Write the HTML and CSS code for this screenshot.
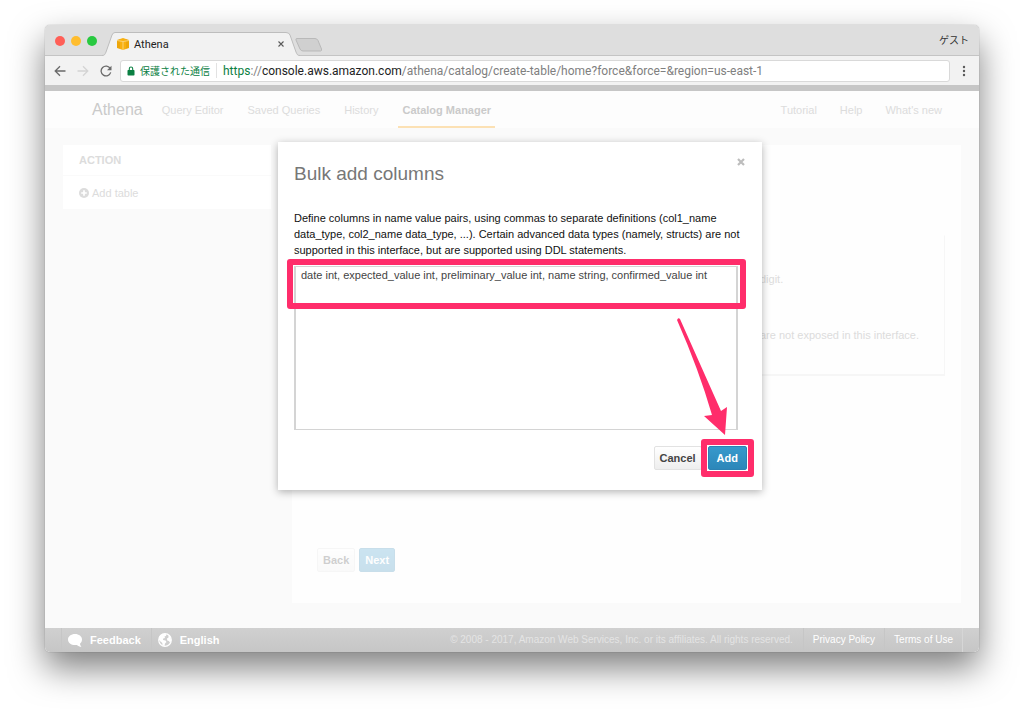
FILE: index.html
```html
<!DOCTYPE html>
<html lang="en">
<head>
    <meta charset="UTF-8">
    <meta name="viewport" content="width=device-width, initial-scale=1.0">
    <title>Athena</title>

    <link rel="stylesheet" href="styles.css">
</head>
<body>
    <div class="window">
        <div class="tab-bar">
            <div class="lights">
                <span class="light red"></span>
                <span class="light yellow"></span>
                <span class="light green"></span>
            </div>
            <div class="tab">
                <svg class="tab-shape" viewBox="0 0 198 24" preserveAspectRatio="none">
                    <path d="M0 23.5 C3 23.5 3 22 4 20 L10 3 Q11 .5 13 .5 H184 Q187 .5 188 3 L194 20 C195 22 195 23.5 198 23.5 V24 H0 Z" fill="#f2f2f2"/>
                    <path d="M0 23.5 C3 23.5 3 22 4 20 L10 3 Q11 .5 13 .5 H184 Q187 .5 188 3 L194 20 C195 22 195 23.5 198 23.5" fill="none" stroke="#bdbdbd"/>
                </svg>
                <svg class="favicon" viewBox="0 0 12 12">
                    <path d="M0 2 L3 1 V11 L0 10 Z M12 2 L9 1 V11 L12 10 Z" fill="#eda60a"/>
                    <path d="M3 1 L6 0 L9 1 V11 L6 12 L3 11 Z" fill="#f8b010"/>
                    <path d="M0 2.500 L6 3.500 L12 2.500 M6 3.500 V12" stroke="#fbdc90" stroke-width=".8" fill="none"/>
                </svg>
                <span class="tab-title">Athena</span>
                <button class="tab-close" aria-label="Close tab">
                    <svg width="8" height="8" viewBox="0 0 8 8"><path d="M1.500 1.500 L6.500 6.500 M6.500 1.500 L1.500 6.500" stroke="#5a5a5a" stroke-width="1.1"/></svg>
                </button>
            </div>
            <svg class="new-tab" width="28" height="14" viewBox="0 0 28 14">
                <path d="M2 .5 H20 Q22 .5 23 2.500 L26.500 11 Q27 13 25.500 13 H8 Q6 13 5 11 L1 2 Q.5 .5 2 .5 Z" fill="#d0d0d0" stroke="#b9b9b9"/>
            </svg>
            <span class="guest">ゲスト</span>
        </div>

        <div class="toolbar">
            <button aria-label="Back">
                <svg width="12" height="12" viewBox="0 0 12 12"><path d="M11.500 6 H1.500 M6 1.200 L1.200 6 L6 10.800" stroke="#6a6a6a" stroke-width="1.300" fill="none"/></svg>
            </button>
            <button aria-label="Forward">
                <svg width="12" height="12" viewBox="0 0 12 12"><path d="M.5 6 H10.500 M6 1.200 L10.800 6 L6 10.800" stroke="#d4d4d4" stroke-width="1.300" fill="none"/></svg>
            </button>
            <button aria-label="Reload">
                <svg width="12" height="12" viewBox="0 0 12 12"><path d="M10.300 3.600 A4.900 4.900 0 1 0 10.700 7.400" stroke="#6a6a6a" stroke-width="1.300" fill="none"/><path d="M11.500 .7 V5.200 H7 Z" fill="#6a6a6a"/></svg>
            </button>
            <div class="address">
                <svg width="8" height="10" viewBox="0 0 8 10"><rect x="0.500" y="4" width="7" height="5.500" rx=".8" fill="#0b8043"/><path d="M2.300 4.500 V2.700 A1.700 1.700 0 0 1 5.700 2.700 V4.500" stroke="#0b8043" stroke-width="1.100" fill="none"/></svg>
                <span class="secure">保護された通信</span>
                <span class="url"><span class="scheme">https</span>://<span class="host">console.aws.amazon.com</span>/athena/catalog/create-table/home?force&amp;force=&amp;region=us-east-1</span>
            </div>
            <button aria-label="Menu">
                <svg width="4" height="12" viewBox="0 0 4 12" fill="#5a5a5a"><circle cx="2" cy="2" r="1.200"/><circle cx="2" cy="6" r="1.200"/><circle cx="2" cy="10" r="1.200"/></svg>
            </button>
        </div>

        <div class="page">
            <nav class="nav">
                <a href="#" class="brand">Athena</a>
                <a href="#">Query Editor</a>
                <a href="#">Saved Queries</a>
                <a href="#">History</a>
                <a href="#" class="active">Catalog Manager</a>
                <div class="nav-right">
                    <a href="#">Tutorial</a>
                    <a href="#">Help</a>
                    <a href="#">What's new</a>
                </div>
            </nav>

            <main class="content">
                <aside class="sidebar">
                    <h2>ACTION</h2>
                    <a href="#">
                        <svg width="10" height="10" viewBox="0 0 10 10"><circle cx="5" cy="5" r="5" fill="#dcdcdc"/><path d="M5 2.200 V7.800 M2.200 5 H7.800" stroke="#fff" stroke-width="1.700"/></svg>
                        Add table
                    </a>
                </aside>
                <section class="panel">
                    <div class="form-box">
                        <div class="hints">
                            <p>digit.</p>
                            <p>are not exposed in this interface.</p>
                        </div>
                    </div>
                    <div class="steps">
                        <button class="btn faded">Back</button>
                        <button class="btn primary faded">Next</button>
                    </div>
                </section>
            </main>

            <footer class="footer">
                <a href="#" class="big">
                    <svg width="14" height="13" viewBox="0 0 14 13"><path d="M7 0 C11 0 14 2.400 14 5.500 C14 7.300 13.200 8.700 12 9.700 C12.100 11 12.800 12 13.500 12.700 C11.500 12.700 10 12 9 10.900 C4 11.700 0 9.300 0 5.500 C0 2.400 3 0 7 0 Z" fill="#fff"/></svg>
                    Feedback
                </a>
                <a href="#" class="big">
                    <svg width="14" height="14" viewBox="0 0 14 14"><circle cx="7" cy="7" r="6.300" fill="#cfcfcf" stroke="#fff" stroke-width="1.200"/><path d="M1 5 C2 2 4 .7 7 .8 L8.500 1.500 L8 3 L6.500 3.500 L7 5 L5.200 5.500 L5 7 L7.500 7.500 L8.500 9 L7 10.500 L6.500 13 L4.500 12.500 L4.300 10 L2.500 8.500 L1 7 Z M10.500 2 L12.500 4 L13.200 8 L12 9.500 L10.800 8 L9.200 7.500 L9 5.500 L10.500 4.500 Z" fill="#fff"/></svg>
                    English
                </a>
                <span class="copyright">© 2008 - 2017, Amazon Web Services, Inc. or its affiliates. All rights reserved.</span>
                <a href="#">Privacy Policy</a>
                <a href="#">Terms of Use</a>
            </footer>

            <div class="modal" role="dialog" aria-labelledby="modalTitle">
                <button class="modal-close" aria-label="Close">
                    <svg width="8" height="8" viewBox="0 0 8 8"><path d="M1 1 L7 7 M7 1 L1 7" stroke="#bdbdbd" stroke-width="2.200"/></svg>
                </button>
                <h1 id="modalTitle">Bulk add columns</h1>
                <label for="columns">Define columns in name value pairs, using commas to separate definitions (col1_name data_type, col2_name data_type, ...). Certain advanced data types (namely, structs) are not supported in this interface, but are supported using DDL statements.</label>
                <div class="field">
                    <textarea id="columns" spellcheck="false">date int, expected_value int, preliminary_value int, name string, confirmed_value int</textarea>
                    <div class="mark mark-text"></div>
                    <svg class="arrow" width="52" height="118" viewBox="0 0 52 118"><path d="M1 .5 Q2 0 3 1 L44 93 L50 89 L48 117 L27 98 L35 97 Q22 52 0 2 Z" fill="#ff2d6b"/></svg>
                </div>
                <div class="actions">
                    <button class="btn">Cancel</button>
                    <div class="add">
                        <button class="btn primary">Add</button>
                        <div class="mark mark-add"></div>
                    </div>
                </div>
            </div>
        </div>
    </div>
</body>
</html>
```
FILE: styles.css
```css
* {
    box-sizing: border-box;
}

body {
    margin: 0;
    padding: 25px 45px 64px;
    background-color: #fff;
    font-family: "Liberation Sans", Arial, sans-serif;
    font-size: 11px;
}

a {
    color: inherit;
    text-decoration: none;
}

button {
    padding: 0;
    border: none;
    background: none;
    font-family: inherit;
    font-size: 11px;
    cursor: pointer;
}

svg {
    display: block;
    flex: none;
}

.window {
    border-radius: 5px;
    box-shadow: 0 0 1px rgba(0, 0, 0, 0.5), 0 16px 34px rgba(0, 0, 0, 0.5);
}

/* browser chrome */
.tab-bar {
    display: flex;
    height: 31px;
    padding: 0 10px;
    background-color: #dedede;
    border-bottom: 1px solid #c4c4c4;
    border-radius: 5px 5px 0 0;
    font-family: Roboto, "Noto Sans CJK JP", sans-serif;
}

.lights {
    display: flex;
    gap: 6px;
    padding-top: 11px;
}

.light {
    width: 10px;
    height: 10px;
    border-radius: 50%;
}

.red {
    background-color: #ff5f57;
}

.yellow {
    background-color: #ffbd2e;
}

.green {
    background-color: #28c940;
}

.tab {
    position: relative;
    display: flex;
    align-items: center;
    width: 198px;
    height: 24px;
    margin: 7px 0 0 5px;
    padding: 0 15px;
}

.tab-shape {
    position: absolute;
    left: 0;
    top: 0;
    width: 100%;
    height: 100%;
}

.favicon {
    position: relative;
    width: 12px;
    height: 12px;
    margin-right: 5px;
}

.tab-title {
    position: relative;
    flex: 1;
    color: #222;
}

.tab-close {
    position: relative;
}

.new-tab {
    margin-top: 13px;
    margin-left: -5px;
}

.guest {
    margin-left: auto;
    color: #333;
    font-size: 10px;
    line-height: 32px;
}

.toolbar {
    display: flex;
    align-items: center;
    gap: 11px;
    height: 29px;
    padding: 0 13px 0 9px;
    background-color: #f2f2f2;
}

.address {
    display: flex;
    align-items: center;
    flex: 1;
    min-width: 0;
    height: 22px;
    margin-left: -3px;
    margin-right: 1px;
    padding-left: 6px;
    background-color: #fff;
    border: 1px solid #d9d9d9;
    border-radius: 3px;
    font-family: Roboto, "Noto Sans CJK JP", sans-serif;
    white-space: nowrap;
    overflow: hidden;
}

.secure {
    margin-left: 5px;
    padding-right: 6px;
    border-right: 1px solid #e2e2e2;
    color: #0b8043;
    font-size: 10px;
}

.url {
    margin-left: 6px;
    color: #808080;
    font-size: 12px;
}

.scheme {
    color: #0b8043;
}

.host {
    color: #222;
}

/* console page */
.page {
    position: relative;
    border-top: 6px solid #c6c6c6;
    background-color: #fafafa;
    border-radius: 0 0 5px 5px;
}

.nav {
    display: flex;
    align-items: stretch;
    gap: 24px;
    height: 37px;
    padding: 0 37px 0 47px;
    background-color: #fdfdfd;
    color: #dcdcdc;
    line-height: 38px;
}

.brand {
    margin-right: -5px;
    color: #cacaca;
    font-size: 16px;
}

.active {
    margin-left: -4px;
    padding: 0 4px;
    border-bottom: 2px solid #fce1b4;
    color: #cacaca;
    font-weight: bold;
}

.nav-right {
    display: flex;
    gap: 23px;
    margin-left: auto;
}

.content {
    display: flex;
    align-items: flex-start;
    gap: 21px;
    padding: 17px 18px 25px;
}

.sidebar {
    width: 208px;
    background-color: #fff;
    color: #dcdcdc;
}

.sidebar h2 {
    margin: 0;
    padding: 0 16px;
    border-bottom: 1px solid #fafafa;
    font-size: 11px;
    line-height: 30px;
}

.sidebar a {
    display: flex;
    align-items: center;
    gap: 3px;
    height: 33px;
    padding: 0 16px;
}

.panel {
    flex: 1;
    padding: 90px 16px 31px 25px;
    background-color: #fefefe;
}

.form-box {
    height: 141px;
    border: 1px solid #f6f6f6;
    border-top-color: #fefefe;
    border-bottom-width: 2px;
}

.hints {
    width: 184px;
    margin-left: auto;
    padding-top: 35px;
    color: #dcdcdc;
}

.hints p {
    margin: 0 0 40px;
    line-height: 16px;
    white-space: nowrap;
}

.steps {
    display: flex;
    gap: 4px;
    margin-top: 172px;
}

.btn {
    height: 24px;
    padding: 0 5px;
    border: 1px solid #e2e2e2;
    border-radius: 2px;
    background: linear-gradient(#fff, #eee);
    color: #444;
    font-weight: bold;
}

.primary {
    border-color: #2c81b3;
    background: linear-gradient(#3799cc, #2c87b9);
    color: #fff;
}

.faded {
    opacity: 0.25;
}

.footer {
    display: flex;
    height: 24px;
    padding: 0 16px;
    background: linear-gradient(#d0d0d0, #c6c6c6);
    border-radius: 0 0 5px 5px;
    color: #fff;
    font-size: 10px;
    line-height: 24px;
}

.footer a {
    padding: 0 9px;
    border-left: 1px solid #c6c6c6;
}

.footer a:last-child {
    border-right: 1px solid #d6d6d6;
}

.footer .big {
    display: flex;
    align-items: center;
    gap: 8px;
    padding: 0 10px 0 6px;
    font-size: 11px;
    font-weight: bold;
}

.copyright {
    margin-left: auto;
    padding-right: 10px;
    color: #e4e4e4;
}

/* dialog */
.modal {
    position: absolute;
    left: 50%;
    top: 51px;
    width: 484px;
    margin-left: -234px;
    padding: 20px 24px 20px 16px;
    background-color: #fff;
    box-shadow: 0 2px 8px rgba(0, 0, 0, 0.3);
}

.modal-close {
    position: absolute;
    top: 16px;
    right: 17px;
}

.modal h1 {
    margin: 0 0 24px;
    color: #777;
    font-size: 19px;
    font-weight: normal;
    line-height: 24px;
}

.modal label {
    display: block;
    margin-right: -8px;
    color: #111;
    line-height: 16px;
}

.field {
    position: relative;
    margin: 8px 0 16px;
}

.field textarea {
    display: block;
    width: 100%;
    height: 164px;
    padding: 0 5px;
    border: 2px solid #d4d4d4;
    border-width: 1px 2px;
    resize: none;
    outline: none;
    background-color: #fff;
    color: #444;
    font-family: inherit;
    font-size: 11px;
    line-height: 16px;
}

.actions {
    display: flex;
    justify-content: flex-end;
    gap: 6px;
    margin-right: -9px;
}

.add {
    position: relative;
}

.add .btn {
    padding: 0 8px;
}

/* pink call-outs */
.mark {
    position: absolute;
    border: 6px solid #ff2d6b;
    border-radius: 3px;
    pointer-events: none;
}

.mark-text {
    left: -7px;
    right: -8px;
    top: -7px;
    height: 50px;
}

.mark-add {
    inset: -7px;
}

.arrow {
    position: absolute;
    right: 9px;
    top: 52px;
    pointer-events: none;
}
```
